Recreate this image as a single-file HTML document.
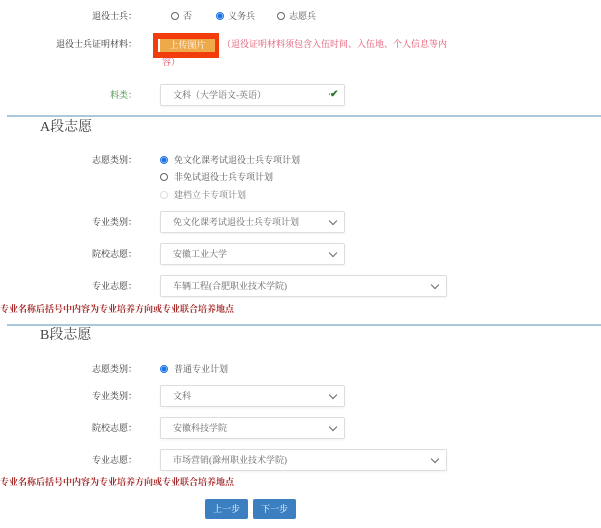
<!DOCTYPE html>
<html><head><meta charset="utf-8"><style>
*{margin:0;padding:0;box-sizing:border-box}
body{width:601px;height:528px;background:#fff;position:relative;overflow:hidden;font-family:"Liberation Serif","Noto Serif CJK SC",serif;font-size:9px;color:#555}
.a{position:absolute;white-space:nowrap;line-height:12px}
.lbl{position:absolute;width:137px;text-align:right;left:0;line-height:12px;color:#333}
.r{position:absolute;width:8px;height:8px;border:1px solid #666;border-radius:50%}
.r.on{border-color:#1a73e8;background:radial-gradient(circle,#1a73e8 2.3px,#fff 2.8px)}
.sel{position:absolute;border:1px solid #ddd;border-radius:2px;background:#fff;height:22px;color:#666;padding-left:12px;line-height:20px;box-shadow:0 1px 2px rgba(0,0,0,.05)}
.sel:after{content:"";position:absolute;right:8px;top:6px;width:5px;height:5px;border-right:1px solid #666;border-bottom:1px solid #666;transform:rotate(45deg)}
.line{position:absolute;left:7px;right:0;height:2px;background:#a9c8dc}
.h{position:absolute;left:40px;font-size:14px;color:#444;line-height:16px}
.note{position:absolute;left:0;color:#a52a2a;font-weight:bold;font-size:9px;line-height:12px}
.btn{position:absolute;top:499px;width:43px;height:20px;background:#3b7fc0;color:#fff;border-radius:2px;text-align:center;line-height:20px}
</style></head><body>
<div class="lbl" style="top:10px">退役士兵：</div>
<div class="r" style="left:171px;top:12px"></div><div class="a" style="left:183px;top:10px">否</div>
<div class="r on" style="left:216px;top:12px"></div><div class="a" style="left:228px;top:10px">义务兵</div>
<div class="r" style="left:277px;top:12px"></div><div class="a" style="left:289px;top:10px">志愿兵</div>

<div class="lbl" style="top:38px">退役士兵证明材料：</div>
<div class="a" style="left:153px;top:33px;width:66px;height:25px;background:#f23c0c"></div>
<div class="a" style="left:158px;top:39px;width:57px;height:13px;background:#eea94a;color:#fff;text-align:center;line-height:13px;border-left:2px solid #fff">上传图片</div>
<div class="a" style="left:222px;top:38px;color:#e0506a">（退役证明材料须包含入伍时间、入伍地、个人信息等内</div>
<div class="a" style="left:162px;top:56px;color:#e0506a">容）</div>

<div class="lbl" style="top:89px;color:#3a8a3a">料类：</div>
<div class="sel" style="left:160px;top:84px;width:185px">文科（大学语文-英语）</div>
<div class="a" style="left:330px;top:89px;color:#2a7a2a;font-weight:bold;background:#fff;font-size:10px">✔</div>

<div class="line" style="top:115px"></div>
<div class="h" style="top:120px">A段志愿</div>

<div class="lbl" style="top:154px">志愿类别：</div>
<div class="r on" style="left:160px;top:156px"></div><div class="a" style="left:174px;top:154px">免文化课考试退役士兵专项计划</div>
<div class="r" style="left:160px;top:173px"></div><div class="a" style="left:174px;top:171px">非免试退役士兵专项计划</div>
<div class="r" style="left:160px;top:191px;border-color:#ddd"></div><div class="a" style="left:174px;top:189px;color:#777">建档立卡专项计划</div>

<div class="lbl" style="top:216px">专业类别：</div>
<div class="sel" style="left:160px;top:211px;width:185px">免文化课考试退役士兵专项计划</div>
<div class="lbl" style="top:248px">院校志愿：</div>
<div class="sel" style="left:160px;top:243px;width:185px">安徽工业大学</div>
<div class="lbl" style="top:280px">专业志愿：</div>
<div class="sel" style="left:160px;top:275px;width:287px">车辆工程(合肥职业技术学院)</div>
<div class="note" style="top:303px">专业名称后括号中内容为专业培养方向或专业联合培养地点</div>

<div class="line" style="top:324px"></div>
<div class="h" style="top:328px">B段志愿</div>

<div class="lbl" style="top:363px">志愿类别：</div>
<div class="r on" style="left:160px;top:365px"></div><div class="a" style="left:174px;top:363px">普通专业计划</div>
<div class="lbl" style="top:390px">专业类别：</div>
<div class="sel" style="left:160px;top:385px;width:185px">文科</div>
<div class="lbl" style="top:422px">院校志愿：</div>
<div class="sel" style="left:160px;top:417px;width:185px">安徽科技学院</div>
<div class="lbl" style="top:454px">专业志愿：</div>
<div class="sel" style="left:160px;top:449px;width:287px">市场营销(滁州职业技术学院)</div>
<div class="note" style="top:476px">专业名称后括号中内容为专业培养方向或专业联合培养地点</div>

<div class="btn" style="left:205px">上一步</div>
<div class="btn" style="left:253px">下一步</div>
</body></html>
